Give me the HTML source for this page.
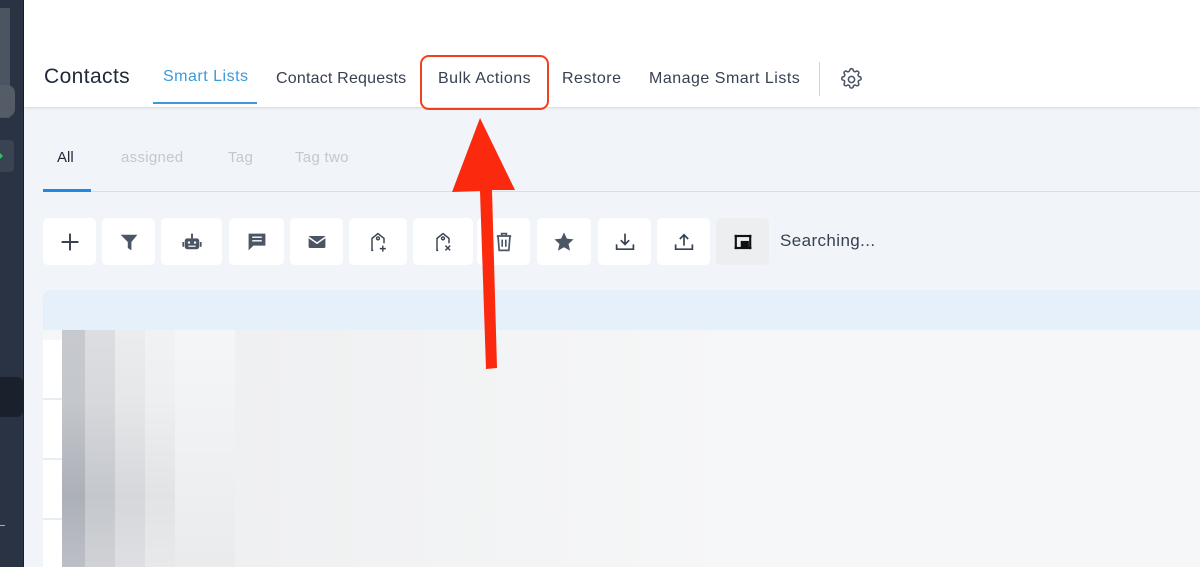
<!DOCTYPE html>
<html><head><meta charset="utf-8"><style>
*{margin:0;padding:0;box-sizing:border-box}
body{width:1200px;height:567px;overflow:hidden;background:#f1f5f9;font-family:"Liberation Sans",sans-serif;position:relative}
.abs{position:absolute}
.side{left:0;top:0;width:24px;height:567px;background:#2a3344;border-right:1px solid #1a202b}
.top{left:24px;top:0;width:1176px;height:107px;background:#fff;box-shadow:0 1px 3px rgba(0,0,0,.12)}
.nav{top:68px;font-size:16px;color:#374151;letter-spacing:.5px}
.btn{top:218px;height:47px;background:#fff;border-radius:5px;display:flex;align-items:center;justify-content:center}
.btn svg{width:24px;height:24px}
</style></head><body>
<div class="abs side">
 <div class="abs" style="left:0;top:8px;width:10px;height:110px;background:#4b5461"></div>
 <div class="abs" style="left:0;top:85px;width:15px;height:32px;background:#545c68;border-radius:0 8px 8px 0"></div>
 <div class="abs" style="left:0;top:140px;width:14px;height:32px;background:#3a4352;border-radius:0 4px 4px 0"></div>
 <div class="abs" style="left:0;top:153px;width:0;height:0;border-left:3px solid #22c55e;border-top:3px solid transparent;border-bottom:3px solid transparent"></div>
 <div class="abs" style="left:0;top:377px;width:23px;height:40px;background:#1a202c;border-radius:0 6px 6px 0"></div>
 <div class="abs" style="left:0;top:525px;width:5px;height:1px;background:#aab"></div>
</div>
<div class="abs top"></div>
<div class="abs" style="left:44px;top:65px;font-size:21px;color:#1f2937;letter-spacing:.4px">Contacts</div>
<div class="abs nav" style="left:163px;top:68px;color:#3b9ad9">Smart Lists</div>
<div class="abs" style="left:153px;top:102px;width:104px;height:2px;background:#3b9ad9"></div>
<div class="abs nav" style="left:276px;top:70px;letter-spacing:.2px">Contact Requests</div>
<div class="abs nav" style="left:438px;top:70px">Bulk Actions</div>
<div class="abs nav" style="left:562px;top:70px">Restore</div>
<div class="abs nav" style="left:649px;top:70px">Manage Smart Lists</div>
<div class="abs" style="left:819px;top:62px;width:1px;height:34px;background:#d1d5db"></div>
<svg class="abs" style="left:839px;top:67px" width="25" height="25" viewBox="0 0 24 24" fill="none" stroke="#4b5563" stroke-width="1.5"><path d="M10.3 3.3a1.7 1.7 0 013.4 0 1.7 1.7 0 002.5 1 1.7 1.7 0 012.4 2.4 1.7 1.7 0 001 2.6 1.7 1.7 0 010 3.4 1.7 1.7 0 00-1 2.5 1.7 1.7 0 01-2.4 2.4 1.7 1.7 0 00-2.5 1 1.7 1.7 0 01-3.4 0 1.7 1.7 0 00-2.6-1 1.7 1.7 0 01-2.4-2.4 1.7 1.7 0 00-1-2.5 1.7 1.7 0 010-3.4 1.7 1.7 0 001-2.6 1.7 1.7 0 012.4-2.4 1.7 1.7 0 002.6-1z"/><circle cx="12" cy="12" r="3"/></svg>
<div class="abs" style="left:420px;top:55px;width:129px;height:55px;border:2.5px solid #f0401e;border-radius:9px"></div>

<div class="abs" style="left:57px;top:149px;font-size:15px;color:#1f2937">All</div>
<div class="abs" style="left:121px;top:149px;font-size:15px;color:#c4c8ce;letter-spacing:.3px">assigned</div>
<div class="abs" style="left:228px;top:149px;font-size:15px;color:#c4c8ce;letter-spacing:.3px">Tag</div>
<div class="abs" style="left:295px;top:149px;font-size:15px;color:#c4c8ce;letter-spacing:.3px">Tag two</div>
<div class="abs" style="left:43px;top:191px;width:1157px;height:1px;background:#d9dee4"></div>
<div class="abs" style="left:43px;top:189px;width:48px;height:3px;background:#1e88e5"></div>

<div class="abs btn" style="left:43px;width:53px"><svg viewBox="0 0 20 20" stroke="#374151" stroke-width="1.6"><path d="M10 3v14M3 10h14"/></svg></div>
<div class="abs btn" style="left:102px;width:53px"><svg viewBox="0 0 20 20" fill="#4b5563"><path d="M3 4h14l-5 6v7l-3-2v-5z"/></svg></div>
<div class="abs btn" style="left:161px;width:61px"><svg viewBox="0 0 20 20" fill="#4b5563"><rect x="4" y="7" width="12" height="9" rx="2"/><rect x="9.2" y="3" width="1.6" height="4"/><rect x="2" y="10" width="1.5" height="4"/><rect x="16.5" y="10" width="1.5" height="4"/><circle cx="7.5" cy="10.5" r="1" fill="#fff"/><circle cx="12.5" cy="10.5" r="1" fill="#fff"/><rect x="7" y="13" width="6" height="1" fill="#fff"/></svg></div>
<div class="abs btn" style="left:229px;width:55px"><svg viewBox="0 0 20 20" fill="#4b5563"><path d="M3 3h14v10H7l-4 4z"/><path d="M6 6h8M6 9h8" stroke="#fff" stroke-width="1.2"/></svg></div>
<div class="abs btn" style="left:290px;width:53px"><svg viewBox="0 0 20 20" fill="#4b5563"><rect x="3" y="5" width="14" height="10" rx="1"/><path d="M3 6l7 5 7-5" stroke="#fff" stroke-width="1.3" fill="none"/></svg></div>
<div class="abs btn" style="left:349px;width:58px"><svg viewBox="0 0 20 20" fill="none" stroke="#374151" stroke-width="1.2"><path d="M6 17H5V7l5-4 5 4v4"/><circle cx="10" cy="7" r="1.2"/><path d="M14 13v5M11.5 15.5h5"/></svg></div>
<div class="abs btn" style="left:413px;width:60px"><svg viewBox="0 0 20 20" fill="none" stroke="#374151" stroke-width="1.2"><path d="M6 17H5V7l5-4 5 4v4"/><circle cx="10" cy="7" r="1.2"/><path d="M12 13l4 4M16 13l-4 4"/></svg></div>
<div class="abs btn" style="left:477px;width:53px"><svg viewBox="0 0 20 20" fill="none" stroke="#4b5563" stroke-width="1.4"><path d="M4 5h12M8 5V3h4v2M5 5l1 12h8l1-12M8.5 8v6M11.5 8v6"/></svg></div>
<div class="abs btn" style="left:537px;width:54px"><svg viewBox="0 0 20 20" fill="#4b5563"><path d="M10 2l2.4 5.2 5.6.6-4.2 3.8 1.2 5.6L10 14.4 5 17.2l1.2-5.6L2 7.8l5.6-.6z"/></svg></div>
<div class="abs btn" style="left:598px;width:53px"><svg viewBox="0 0 20 20" fill="none" stroke="#374151" stroke-width="1.4"><path d="M10 3v9M6.5 8.5 10 12l3.5-3.5M3 12v4h14v-4"/></svg></div>
<div class="abs btn" style="left:657px;width:53px"><svg viewBox="0 0 20 20" fill="none" stroke="#374151" stroke-width="1.4"><path d="M10 13V4M6.5 7.5 10 4l3.5 3.5M3 12v4h14v-4"/></svg></div>
<div class="abs btn" style="left:716px;width:53px;background:#eceef0"><svg viewBox="0 0 20 20" fill="none" stroke="#111" stroke-width="1.8"><rect x="4" y="5" width="12" height="10"/><path d="M3 5h2M15 5h2M3 15h2M15 15h2"/><rect x="9" y="10" width="5" height="4" fill="#111"/></svg></div>
<div class="abs" style="left:780px;top:231px;font-size:17px;color:#374151;letter-spacing:.4px">Searching...</div>

<div class="abs" style="left:43px;top:290px;width:1157px;height:40px;background:#e6f0fa;border-radius:8px 0 0 0"></div>
<div class="abs" style="left:43px;top:330px;width:1157px;height:237px;background:#f6f7f8"></div>
<div class="abs" style="left:43px;top:340px;width:19px;height:227px;background:repeating-linear-gradient(#fff 0 58px,#e8edf2 58px 60px)"></div>
<div class="abs" style="left:62px;top:330px;width:23px;height:237px;background:linear-gradient(#c6c9ce,#c4c7cc 30%,#acb0b7 70%,#bcc0c6)"></div>
<div class="abs" style="left:85px;top:330px;width:30px;height:237px;background:linear-gradient(#dcdee2,#d6d8dc 30%,#c4c7cc 70%,#d0d2d6)"></div>
<div class="abs" style="left:115px;top:330px;width:30px;height:237px;background:linear-gradient(#ebecee,#e6e7e9 30%,#d5d7da 70%,#dedfe2)"></div>
<div class="abs" style="left:145px;top:330px;width:30px;height:237px;background:linear-gradient(#f1f2f3,#eeeff0 30%,#e2e3e5 70%,#e8e9ea)"></div>
<div class="abs" style="left:175px;top:330px;width:60px;height:237px;background:linear-gradient(#f5f6f7,#f1f2f3 40%,#eaebec)"></div>
<div class="abs" style="left:235px;top:330px;width:500px;height:237px;background:linear-gradient(90deg,#eff0f1,#f6f7f8)"></div>

<svg class="abs" style="left:0;top:0" width="1200" height="567"><path d="M480 118 L452 192 L480 191 L486 369 L497 368 L492 190 L515 190 Z" fill="#fb2a0f"/></svg>
</body></html>
